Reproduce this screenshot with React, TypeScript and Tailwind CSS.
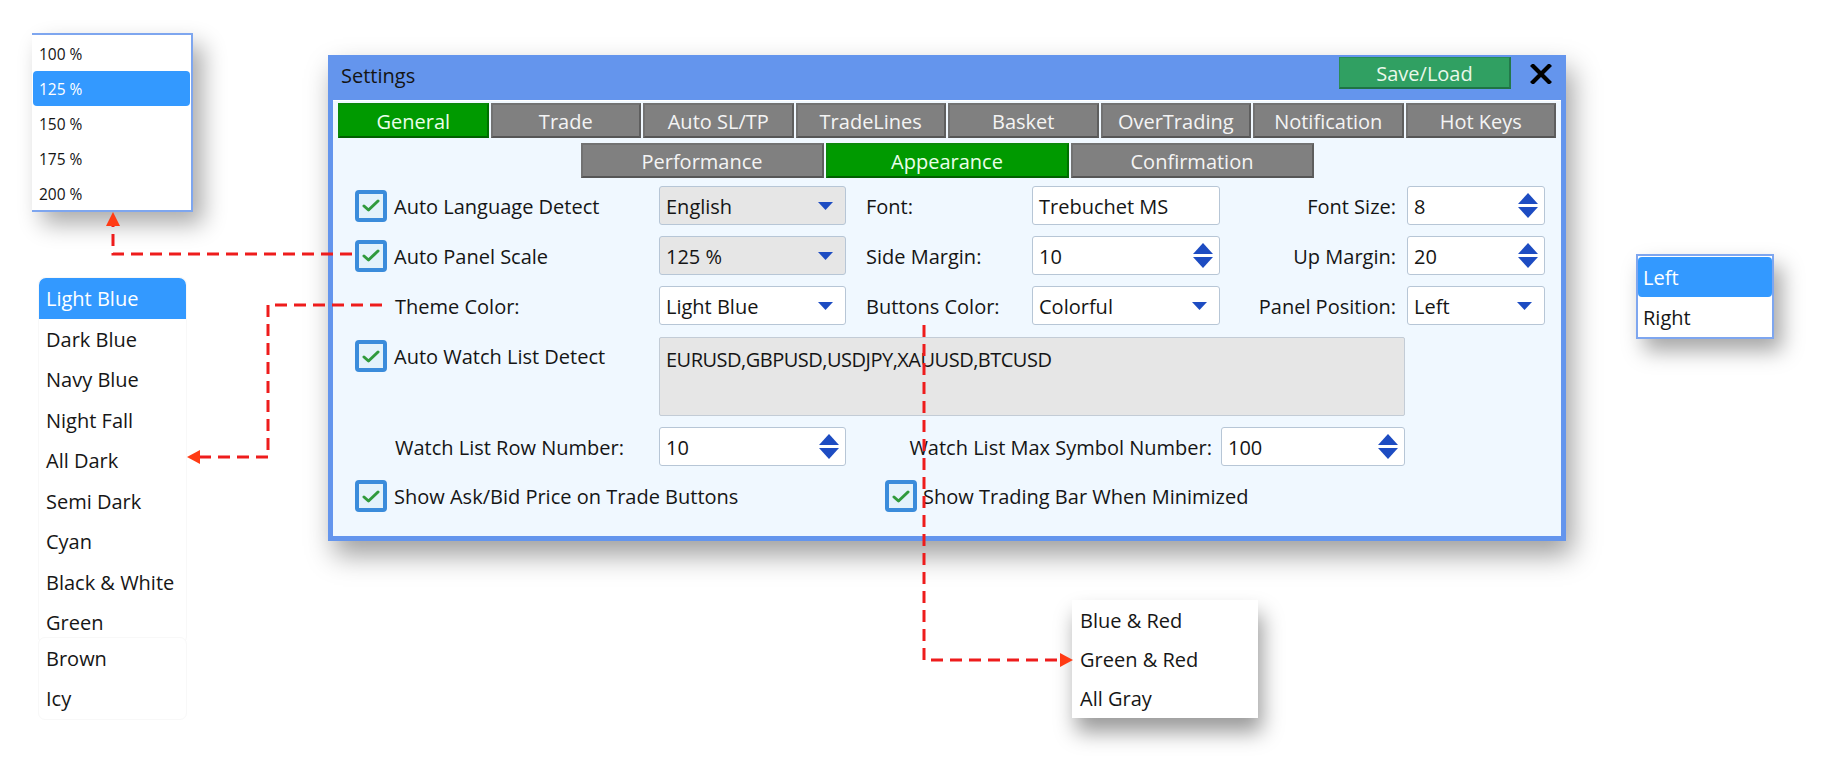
import React from "react";

const BLUE_ARROW = "#1d4cc2";

function CheckBox() {
  return (
    <div className="w-[32px] h-[32px] shrink-0 rounded-[4px] border-[4px] border-[#3b8cdb] bg-[#e3f2fb] flex items-center justify-center">
      <svg width="18" height="13" viewBox="0 0 18 13">
        <path d="M2 7 L6.5 11 L16 2" fill="none" stroke="#2f9a3c" strokeWidth="3" strokeLinecap="round" strokeLinejoin="round" />
      </svg>
    </div>
  );
}

function DropArrow() {
  return (
    <svg width="15" height="8" viewBox="0 0 15 8" className="shrink-0">
      <path d="M0 0 H15 L7.5 8 Z" fill={BLUE_ARROW} />
    </svg>
  );
}

function SpinArrows() {
  return (
    <svg width="20" height="25" viewBox="0 0 20 25" className="shrink-0">
      <path d="M10 0 L20 11 H0 Z" fill={BLUE_ARROW} />
      <path d="M0 14 H20 L10 25 Z" fill={BLUE_ARROW} />
    </svg>
  );
}

function Select({ value, width, disabled }: { value: string; width: string; disabled?: boolean }) {
  return (
    <div
      className={`${width} h-[39px] shrink-0 rounded-[3px] border border-[#b7c6d6] ${
        disabled ? "bg-[#e6e6e6]" : "bg-white"
      } flex items-center justify-between pl-[6px] pr-[12px]`}
    >
      <span className="leading-[24px] pt-[2px]">{value}</span>
      <DropArrow />
    </div>
  );
}

function Spin({ value, width }: { value: string; width: string }) {
  return (
    <div className={`${width} h-[39px] shrink-0 rounded-[3px] border border-[#b7c6d6] bg-white flex items-center justify-between pl-[6px] pr-[6px]`}>
      <span className="leading-[24px] pt-[2px]">{value}</span>
      <SpinArrows />
    </div>
  );
}

function TextBox({ value, width }: { value: string; width: string }) {
  return (
    <div className={`${width} h-[39px] shrink-0 rounded-[3px] border border-[#b7c6d6] bg-white flex items-center pl-[6px]`}>
      <span className="leading-[24px] pt-[2px]">{value}</span>
    </div>
  );
}

function Tab({ label, active, className }: { label: string; active?: boolean; className: string }) {
  return (
    <div
      className={`${className} h-[35px] flex items-center justify-center border-2 pt-[2px] ${
        active
          ? "bg-[#009a00] border-[#0a8a0a] border-b-[#006000] border-r-[#007000] text-[#eaffea]"
          : "bg-[#808080] border-[#727272] border-b-[#565656] border-r-[#5e5e5e] text-[#f4f4f4]"
      } text-[20px] leading-[24px]`}
    >
      {label}
    </div>
  );
}

function Dialog() {
  const row1 = ["General", "Trade", "Auto SL/TP", "TradeLines", "Basket", "OverTrading", "Notification", "Hot Keys"];
  const row2 = ["Performance", "Appearance", "Confirmation"];
  return (
    <div className="absolute left-[328px] top-[55px] w-[1238px] flex flex-col bg-[#6495ed] px-[5px] pb-[5px] shadow-[6px_14px_26px_rgba(0,0,0,0.38)]">
      {/* title bar */}
      <div className="h-[45px] flex items-start">
        <span className="mt-[9px] ml-[8px] text-[20px] leading-[24px] text-[#141414]">Settings</span>
        <div className="ml-auto mt-[2px] w-[172px] h-[32px] pt-[2px] bg-[#30a062] border border-[#2a8d57] border-b-2 border-b-[#1f7345] border-r-2 border-r-[#23794a] flex items-center justify-center text-[#eaf8ea] text-[20px] leading-[24px]">
          Save/Load
        </div>
        <svg className="mt-[9px] ml-[19px] mr-[9px]" width="22" height="20" viewBox="0 0 22 20">
          <path d="M3 2 L19 18 M19 2 L3 18" stroke="#000" strokeWidth="4.2" strokeLinecap="square" />
        </svg>
      </div>

      {/* body */}
      <div className="bg-[#f0f8ff] border-t border-white h-[436px] flex flex-col px-[5px] pt-[2px] text-[20px] text-[#151515]">
        <div className="flex gap-[2px]">
          {row1.map((t) => (
            <Tab key={t} label={t} active={t === "General"} className="flex-1" />
          ))}
        </div>
        <div className="mt-[5px] flex justify-center gap-[2px]">
          {row2.map((t) => (
            <Tab key={t} label={t} active={t === "Appearance"} className="w-[243px]" />
          ))}
        </div>

        <div className="mt-[8px] pl-[17px] flex flex-col">
          {/* language / font / size */}
          <div className="flex items-center h-[39px]">
            <div className="w-[304px] shrink-0 flex items-center gap-[7px]">
              <CheckBox />
              <span className="leading-[24px] pt-[2px]">Auto Language Detect</span>
            </div>
            <Select value="English" width="w-[187px]" disabled />
            <div className="w-[186px] shrink-0 pl-[20px] pt-[2px] leading-[24px]">Font:</div>
            <TextBox value="Trebuchet MS" width="w-[188px]" />
            <div className="w-[187px] shrink-0 pr-[11px] pt-[2px] text-right leading-[24px]">Font Size:</div>
            <Spin value="8" width="w-[138px]" />
          </div>

          {/* scale / margins */}
          <div className="mt-[11px] flex items-center h-[39px]">
            <div className="w-[304px] shrink-0 flex items-center gap-[7px]">
              <CheckBox />
              <span className="leading-[24px] pt-[2px]">Auto Panel Scale</span>
            </div>
            <Select value="125 %" width="w-[187px]" disabled />
            <div className="w-[186px] shrink-0 pl-[20px] pt-[2px] leading-[24px]">Side Margin:</div>
            <Spin value="10" width="w-[188px]" />
            <div className="w-[187px] shrink-0 pr-[11px] pt-[2px] text-right leading-[24px]">Up Margin:</div>
            <Spin value="20" width="w-[138px]" />
          </div>

          {/* colours / position */}
          <div className="mt-[11px] flex items-center h-[39px]">
            <div className="w-[304px] shrink-0 pl-[40px] pt-[2px] leading-[24px]">Theme Color:</div>
            <Select value="Light Blue" width="w-[187px]" />
            <div className="w-[186px] shrink-0 pl-[20px] pt-[2px] leading-[24px]">Buttons Color:</div>
            <Select value="Colorful" width="w-[188px]" />
            <div className="w-[187px] shrink-0 pr-[11px] pt-[2px] text-right leading-[24px]">Panel Position:</div>
            <Select value="Left" width="w-[138px]" />
          </div>

          {/* watch list */}
          <div className="mt-[12px] flex items-start">
            <div className="w-[304px] shrink-0 flex items-center gap-[7px] mt-[3px]">
              <CheckBox />
              <span className="leading-[24px] pt-[2px]">Auto Watch List Detect</span>
            </div>
            <div className="w-[746px] h-[79px] shrink-0 rounded-[2px] border border-[#c3ccd6] bg-[#e6e6e6] px-[6px] pt-[10px] leading-[24px] tracking-[-0.5px]">
              EURUSD,GBPUSD,USDJPY,XAUUSD,BTCUSD
            </div>
          </div>

          <div className="mt-[11px] flex items-center h-[39px]">
            <div className="w-[304px] shrink-0 pl-[40px] pt-[2px] leading-[24px]">Watch List Row Number:</div>
            <Spin value="10" width="w-[187px]" />
            <div className="w-[375px] shrink-0 pr-[9px] pt-[2px] text-right leading-[24px]">Watch List Max Symbol Number:</div>
            <Spin value="100" width="w-[184px]" />
          </div>

          <div className="mt-[14px] flex items-center">
            <div className="w-[530px] shrink-0 flex items-center gap-[7px]">
              <CheckBox />
              <span className="leading-[24px] pt-[2px]">Show Ask/Bid Price on Trade Buttons</span>
            </div>
            <div className="flex items-center gap-[6px]">
              <CheckBox />
              <span className="leading-[24px] pt-[2px]">Show Trading Bar When Minimized</span>
            </div>
          </div>
        </div>
      </div>
    </div>
  );
}

function ScalePopup() {
  const items = ["100 %", "125 %", "150 %", "175 %", "200 %"];
  return (
    <div className="absolute left-[32px] top-[33px] w-[161px] h-[179px] bg-white border-t-2 border-r-2 border-b-2 border-[#7ea6ef] pt-[1px] shadow-[10px_12px_22px_rgba(0,0,0,0.33)] text-[15.5px] text-[#141414]">
      {items.map((t) => (
        <div
          key={t}
          className={`h-[35px] mx-[1px] pt-[2px] flex items-center pl-[6px] ${
            t === "125 %" ? "bg-[#3399ff] text-white rounded-[4px]" : ""
          }`}
        >
          {t}
        </div>
      ))}
    </div>
  );
}

function ThemeList() {
  const first = ["Light Blue", "Dark Blue", "Navy Blue", "Night Fall", "All Dark", "Semi Dark", "Cyan", "Black & White", "Green"];
  const second = ["Brown", "Icy"];
  return (
    <div className="absolute left-[38px] top-[277px] w-[149px] flex flex-col text-[20px] text-[#161616]">
      <div className="rounded-[7px] border border-[#f8f8f8] bg-white">
        {first.map((t) => (
          <div
            key={t}
            className={`h-[40.5px] pt-[2px] flex items-center pl-[7px] ${
              t === "Light Blue" ? "bg-[#3399ff] text-white rounded-t-[7px]" : ""
            }`}
          >
            {t}
          </div>
        ))}
      </div>
      <div className="-mt-[7px] rounded-[7px] border border-[#f8f8f8] bg-white">
        {second.map((t) => (
          <div key={t} className="h-[40.5px] pt-[2px] flex items-center pl-[7px]">
            {t}
          </div>
        ))}
      </div>
    </div>
  );
}

function ButtonsPopup() {
  const items = ["Blue & Red", "Green & Red", "All Gray"];
  return (
    <div className="absolute left-[1072px] top-[600px] w-[186px] h-[118px] bg-white shadow-[4px_14px_20px_rgba(0,0,0,0.4)] text-[20px] text-[#161616]">
      {items.map((t) => (
        <div key={t} className="h-[39.3px] pt-[2px] flex items-center pl-[8px]">
          {t}
        </div>
      ))}
    </div>
  );
}

function PanelPopup() {
  return (
    <div className="absolute left-[1636px] top-[254px] w-[138px] h-[85px] bg-white border-2 border-[#7ea6ef] pt-[1px] shadow-[8px_12px_20px_rgba(0,0,0,0.35)] text-[20px] text-[#161616]">
      <div className="h-[40px] pt-[2px] flex items-center pl-[5px] bg-[#3399ff] text-white rounded-[4px]">Left</div>
      <div className="h-[40px] pt-[2px] flex items-center pl-[5px]">Right</div>
    </div>
  );
}

function Arrows() {
  return (
    <svg className="absolute inset-0 pointer-events-none" width="1839" height="783" viewBox="0 0 1839 783">
      <g fill="none" stroke="#ee1c1c" strokeWidth="3" strokeDasharray="12 7">
        <path d="M352 254 H113 V225" />
        <path d="M382 305 H268 V457 H199" />
        <path d="M924 325 V660 H1061" />
      </g>
      <g fill="#ff3b14">
        <polygon points="113,212 106,226 120,226" />
        <polygon points="187,457 200,450 200,464" />
        <polygon points="1073,660 1060,653 1060,667" />
      </g>
    </svg>
  );
}

export default function App() {
  return (
    <div className="relative w-[1839px] h-[783px] bg-white overflow-hidden font-['Open_Sans','Noto_Sans',sans-serif]">
      <ScalePopup />
      <ThemeList />
      <Dialog />
      <ButtonsPopup />
      <PanelPopup />
      <Arrows />
    </div>
  );
}
